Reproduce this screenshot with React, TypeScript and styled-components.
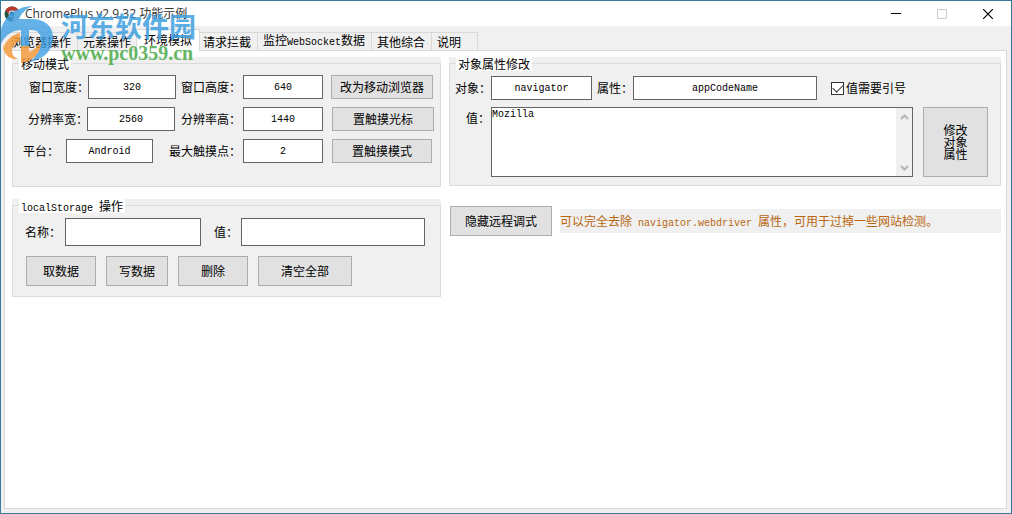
import React from "react";
import styled, { createGlobalStyle } from "styled-components";

const Global = createGlobalStyle`
  * { box-sizing: border-box; }
  html, body { margin: 0; padding: 0; }
  body, button, input, textarea {
    font-family: "Noto Sans CJK SC", sans-serif;
    font-size: 12px;
    line-height: 14px;
    color: #000;
  }
`;

const Window = styled.div`
  position: relative;
  min-height: 100vh;
  display: flex;
  flex-direction: column;
  background: #f0f0f0;
  border: 1px solid #3b7c9e;
  overflow: hidden;
`;

const TitleBar = styled.header`
  display: flex;
  align-items: center;
  height: 25px;
  padding-left: 3px;
  background: #fff;
`;

const Title = styled.h1`
  margin: 0 0 0 5px;
  flex: 1;
  font: 400 12px/18px "Open Sans", "Noto Sans CJK SC", sans-serif;
  color: #333;
`;

const Caption = styled.button`
  width: 46px;
  height: 25px;
  padding: 0;
  border: 0;
  background: none;
  display: grid;
  place-items: center;
`;

const Tabs = styled.nav`
  display: flex;
  align-items: flex-end;
  height: 24px;
  padding-left: 5px;
`;

const Tab = styled.button<{ $w: number; $active?: boolean }>`
  position: relative;
  z-index: ${(p) => (p.$active ? 1 : 0)};
  width: ${(p) => p.$w}px;
  height: ${(p) => (p.$active ? 22 : 18)}px;
  margin: ${(p) => (p.$active ? "0 -2px -1px -2px" : "0")};
  padding: ${(p) => (p.$active ? "0 0 2px 7px" : "0 0 0 5px")};
  border: 1px solid #d9d9d9;
  border-bottom: 0;
  border-left-width: ${(p) => (p.$active ? 1 : 0)}px;
  background: ${(p) => (p.$active ? "#fff" : "#f0f0f0")};
  text-align: left;
  white-space: nowrap;
`;

const Latin = styled.span`
  font-family: "Liberation Mono", monospace;
  font-size: 10px;
`;

const Page = styled.main`
  flex: 1;
  display: flex;
  align-items: flex-start;
  gap: 8px;
  margin: 0 4px 4px 3px;
  padding: 6px 5px 6px 7px;
  background: #fff;
  border: 1px solid #d9d9d9;
`;

const Left = styled.div`
  flex: 0 0 429px;
  display: flex;
  flex-direction: column;
  gap: 12px;
`;

const Right = styled.div`
  flex: 1;
  min-width: 0;
  display: flex;
  flex-direction: column;
  gap: 20px;
`;

const Group = styled.fieldset<{ $bottom: number }>`
  position: relative;
  min-width: 0;
  margin: 0;
  padding: 0 0 ${(p) => p.$bottom}px;
  border: 0;
  background: #f0f0f0;

  &::before {
    content: "";
    position: absolute;
    inset: 6px 0 0 0;
    border: 1px solid #dcdcdc;
    pointer-events: none;
  }
`;

const Legend = styled.legend`
  position: relative;
  float: left;
  margin-left: 7px;
  padding: 0 2px;
  height: 14px;
  background: #fff;
`;

const Rows = styled.div<{ $gap: number; $top: number }>`
  position: relative;
  clear: both;
  display: flex;
  flex-direction: column;
  gap: ${(p) => p.$gap}px;
  padding-top: ${(p) => p.$top}px;
`;

const Row = styled.div<{ $left: number; $right?: number; $gap?: number; $top?: boolean }>`
  display: flex;
  align-items: ${(p) => (p.$top ? "flex-start" : "center")};
  gap: ${(p) => p.$gap ?? 0}px;
  padding-left: ${(p) => p.$left}px;
  padding-right: ${(p) => p.$right ?? 0}px;
`;

const Label = styled.label<{ $w: number; $before?: number; $drop?: boolean }>`
  flex: 0 0 ${(p) => p.$w}px;
  min-width: 0;
  margin-left: ${(p) => p.$before ?? 0}px;
  padding-top: ${(p) => (p.$drop ? 4 : 0)}px;
  white-space: nowrap;
`;

const Field = styled.input<{ $w: number; $h?: number }>`
  width: ${(p) => p.$w}px;
  height: ${(p) => p.$h ?? 24}px;
  padding: 0 2px;
  border: 1px solid #646464;
  border-radius: 0;
  background: #fff;
  font-family: "Liberation Mono", monospace;
  font-size: 10px;
  text-align: center;
  outline: 0;
`;

const Button = styled.button<{ $w: number; $h?: number; $before?: number }>`
  flex: none;
  width: ${(p) => p.$w}px;
  height: ${(p) => p.$h ?? 24}px;
  margin-left: ${(p) => p.$before ?? 0}px;
  padding: 0;
  border: 1px solid #adadad;
  border-radius: 0;
  background: #e1e1e1;
  white-space: nowrap;
`;

const TallButton = styled(Button)`
  line-height: 12px;
  white-space: pre-line;
`;

const ValueBox = styled.div`
  flex: 1;
  display: flex;
  height: 70px;
  border: 1px solid #646464;
  background: #fff;
`;

const ValueText = styled.textarea`
  flex: 1;
  min-width: 0;
  padding: 0;
  border: 0;
  outline: 0;
  resize: none;
  overflow: hidden;
  background: #fff;
  font-family: "Liberation Mono", monospace;
  font-size: 10px;
`;

const ScrollBar = styled.div`
  width: 16px;
  padding: 6px 0 5px;
  display: flex;
  flex-direction: column;
  justify-content: space-between;
  align-items: center;
  background: #f0f0f0;
`;

const CheckLabel = styled.label`
  display: flex;
  align-items: center;
  gap: 2px;
  margin-left: 14px;
  white-space: nowrap;
`;

const Check = styled.input`
  appearance: none;
  width: 13px;
  height: 13px;
  margin: 0;
  border: 1px solid #333;
  background: #fff;
  display: grid;
  place-items: center;

  &:checked::after {
    content: "";
    width: 9px;
    height: 5px;
    margin-bottom: 3px;
    border: solid #333;
    border-width: 0 0 1px 1px;
    transform: rotate(-45deg);
  }
`;

const Hint = styled.p`
  flex: 1;
  margin: 0 0 0 8px;
  padding: 5px 0;
  height: 24px;
  background: #f0f0f0;
  color: #b8660f;
  white-space: nowrap;
`;

const Watermark = styled.div`
  position: absolute;
  left: 0;
  top: 5px;
  z-index: 5;
  display: flex;
  pointer-events: none;
`;

const MarkText = styled.div`
  margin-left: 2px;
  padding-top: 3px;
  white-space: nowrap;
`;

const MarkName = styled.div`
  font: 700 27px/34px "Noto Sans CJK SC", sans-serif;
  color: #3f9fe0;
  opacity: 0.85;
`;

const MarkUrl = styled.div`
  font: 700 20px/20px "Liberation Serif", serif;
  color: #4bab4b;
  opacity: 0.85;
`;

const AppIcon = () => (
  <svg width="16" height="16" viewBox="0 0 16 16" aria-hidden="true">
    <circle cx="8" cy="8" r="7.5" fill="#27543c" />
    <path d="M1.6 4.2A7.5 7.5 0 0 1 14.6 4.5L8 5 5 8.6Z" fill="#b83a30" />
    <path d="M14.6 4.5A7.5 7.5 0 0 1 8 15.5L11 9.5 8 5Z" fill="#e3e0cf" />
    <circle cx="8" cy="8" r="3.4" fill="#eee" />
    <circle cx="8" cy="8" r="2.6" fill="#3c78a8" />
  </svg>
);

const MarkLogo = () => (
  <svg width="58" height="58" viewBox="0 0 58 58" aria-hidden="true">
    <path
      d="M0 38C-4 17 10 1 31 0C24 4 20 8 18 13H31C45 13 53 22 52 33C51 45 43 53 29 56C36 49 41 42 40 33C39 27 36 24 31 24L28 24V40H20V24C12 24 4 29 0 38Z"
      fill="#3f9fe4"
      fillOpacity=".8"
    />
    <path
      d="M2 42C5 34 12 28 19 27V35C14 37 11 41 11 45C11 49 14 52 17 53C10 54 4 50 2 42Z"
      fill="#f39a3d"
      fillOpacity=".85"
    />
    <path
      d="M20 40H28V46C33 44 37 40 40 36C40 47 32 56 20 57Z"
      fill="#f39a3d"
      fillOpacity=".85"
    />
  </svg>
);

const Chevron = ({ down }: { down?: boolean }) => (
  <svg width="9" height="6" viewBox="0 0 9 6" aria-hidden="true">
    <path
      d={down ? "M1 1 4.5 4.5 8 1" : "M1 5 4.5 1.5 8 5"}
      fill="none"
      stroke="#b5b5b5"
      strokeWidth="2"
    />
  </svg>
);

export default function App() {
  return (
    <>
      <Global />
      <Window>
        <TitleBar>
          <AppIcon />
          <Title>ChromePlus v2.9.32 功能示例</Title>
          <Caption aria-label="最小化">
            <svg width="10" height="10">
              <path d="M0 4.5H10" stroke="#000" />
            </svg>
          </Caption>
          <Caption aria-label="最大化" disabled>
            <svg width="10" height="10">
              <path d="M.5 .5H9.5V9.5H.5Z" fill="none" stroke="#ccc" />
            </svg>
          </Caption>
          <Caption aria-label="关闭">
            <svg width="10" height="10">
              <path d="M0 0 10 10M10 0 0 10" stroke="#000" strokeWidth="1.2" />
            </svg>
          </Caption>
        </TitleBar>

        <Tabs>
          <Tab $w={72}>浏览器操作</Tab>
          <Tab $w={60}>元素操作</Tab>
          <Tab $w={64} $active>环境模拟</Tab>
          <Tab $w={60}>请求拦截</Tab>
          <Tab $w={114}>
            监控<Latin>WebSocket</Latin>数据
          </Tab>
          <Tab $w={60}>其他综合</Tab>
          <Tab $w={46}>说明</Tab>
        </Tabs>

        <Page>
          <Left>
            <Group $bottom={24}>
              <Legend>移动模式</Legend>
              <Rows $top={4} $gap={8}>
                <Row $left={17}>
                  <Label $w={59} htmlFor="win-w">窗口宽度：</Label>
                  <Field $w={88} id="win-w" defaultValue="320" />
                  <Label $w={62} $before={5} htmlFor="win-h">窗口高度：</Label>
                  <Field $w={80} id="win-h" defaultValue="640" />
                  <Button $w={102} $before={8}>改为移动浏览器</Button>
                </Row>
                <Row $left={16}>
                  <Label $w={59} htmlFor="res-w">分辨率宽：</Label>
                  <Field $w={88} id="res-w" defaultValue="2560" />
                  <Label $w={62} $before={6} htmlFor="res-h">分辨率高：</Label>
                  <Field $w={80} id="res-h" defaultValue="1440" />
                  <Button $w={102} $before={9}>置触摸光标</Button>
                </Row>
                <Row $left={11}>
                  <Label $w={43} htmlFor="platform">平台：</Label>
                  <Field $w={87} id="platform" defaultValue="Android" />
                  <Label $w={74} $before={16} htmlFor="touch">最大触摸点：</Label>
                  <Field $w={80} id="touch" defaultValue="2" />
                  <Button $w={100} $before={9}>置触摸模式</Button>
                </Row>
              </Rows>
            </Group>

            <Group $bottom={11}>
              <Legend>
                <Latin>localStorage </Latin>操作
              </Legend>
              <Rows $top={5} $gap={10}>
                <Row $left={13}>
                  <Label $w={40} htmlFor="ls-name">名称：</Label>
                  <Field $w={136} $h={28} id="ls-name" />
                  <Label $w={27} $before={13} htmlFor="ls-value">值：</Label>
                  <Field $w={184} $h={28} id="ls-value" />
                </Row>
                <Row $left={14} $gap={10}>
                  <Button $w={70} $h={30}>取数据</Button>
                  <Button $w={62} $h={30}>写数据</Button>
                  <Button $w={70} $h={30}>删除</Button>
                  <Button $w={94} $h={30}>清空全部</Button>
                </Row>
              </Rows>
            </Group>
          </Left>

          <Right>
            <Group $bottom={9}>
              <Legend>对象属性修改</Legend>
              <Rows $top={5} $gap={7}>
                <Row $left={6}>
                  <Label $w={36} htmlFor="obj">对象：</Label>
                  <Field $w={101} id="obj" defaultValue="navigator" />
                  <Label $w={36} $before={5} htmlFor="prop">属性：</Label>
                  <Field $w={184} id="prop" defaultValue="appCodeName" />
                  <CheckLabel>
                    <Check type="checkbox" defaultChecked />
                    值需要引号
                  </CheckLabel>
                </Row>
                <Row $left={17} $right={13} $top>
                  <Label $w={25} $drop htmlFor="val">值：</Label>
                  <ValueBox>
                    <ValueText id="val" defaultValue="Mozilla" />
                    <ScrollBar>
                      <Chevron />
                      <Chevron down />
                    </ScrollBar>
                  </ValueBox>
                  <TallButton $w={65} $h={70} $before={10}>
                    {"修改\n对象\n属性"}
                  </TallButton>
                </Row>
              </Rows>
            </Group>
            <Row $left={1}>
              <Button $w={102} $h={30}>隐藏远程调式</Button>
              <Hint>
                可以完全去除<Latin> navigator.webdriver </Latin>属性，可用于过掉一些网站检测。
              </Hint>
            </Row>
          </Right>
        </Page>

        <Watermark>
          <MarkLogo />
          <MarkText>
            <MarkName>河东软件园</MarkName>
            <MarkUrl>www.pc0359.cn</MarkUrl>
          </MarkText>
        </Watermark>
      </Window>
    </>
  );
}
